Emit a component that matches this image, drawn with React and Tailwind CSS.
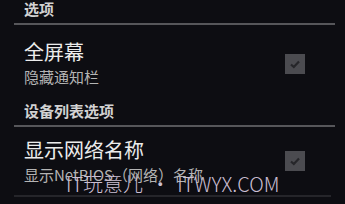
const Check = () => (
  <div className="w-[20px] h-[20px] bg-[#4b4b50] flex items-center justify-center shrink-0">
    <svg width="12" height="10" viewBox="0 0 12 10">
      <path d="M2 5.5 L4.8 8 L10 2.5" stroke="#26262a" strokeWidth="2.2" fill="none" />
    </svg>
  </div>
);

const Header = ({ children }) => (
  <div className="pl-[24px] h-[23px] text-[15px] leading-[18px] font-bold text-[#d2d2d2]">{children}</div>
);

const Divider = () => <div className="ml-[14px] mr-[10px] h-[2px] bg-[#56565a]" />;

const Item = ({ title, sub, className }) => (
  <div className={"flex items-center pl-[24px] pr-[40px] " + className}>
    <div className="flex-1 flex flex-col">
      <div className="text-[20px] leading-[24px] text-[#ececec]">{title}</div>
      <div className="text-[15px] leading-[20px] text-[#b4b4b4] mt-[3px]">{sub}</div>
    </div>
    <Check />
  </div>
);

export default function App() {
  return (
    <div
      className="relative w-[345px] h-[204px] overflow-hidden bg-[#0d0d12]"
      style={{ fontFamily: '"Noto Sans CJK SC", "Noto Sans", sans-serif' }}
    >
      <Header>选项</Header>
      <Divider />
      <Item title="全屏幕" sub="隐藏通知栏" className="h-[77px]" />
      <Header>设备列表选项</Header>
      <Divider />
      <Item title="显示网络名称" sub="显示NetBIOS（网络）名称" className="h-[68px]" />
      <div className="mx-[14px] h-[2px] bg-[#25252a]" />
      <div className="absolute left-[66px] top-[172px] flex items-center text-[20px] leading-[24px] text-[#cbbfd2] font-light whitespace-nowrap">
        <span>IT玩意儿</span>
        <span className="mx-[7px]">•</span>
        <span>ITWYX.COM</span>
      </div>
    </div>
  );
}
